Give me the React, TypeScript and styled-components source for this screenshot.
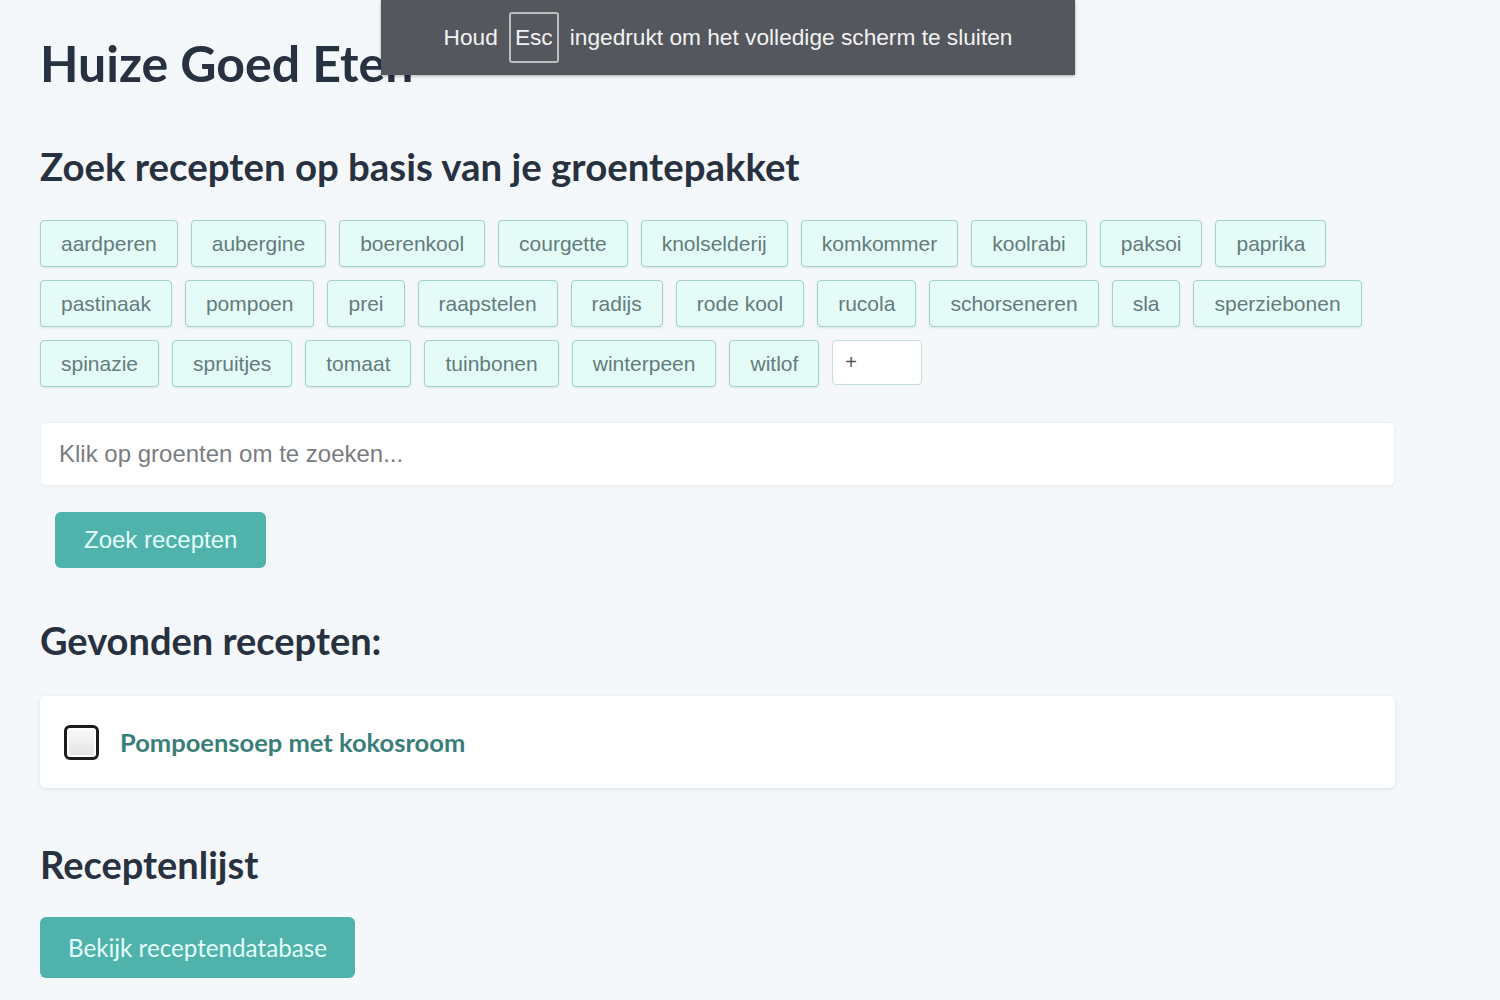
import styled, {createGlobalStyle} from "styled-components";

const GlobalStyle = createGlobalStyle`
    body {
        margin: 0;
        background: #f5f8fb;
        font-family: "Liberation Sans", Arial, sans-serif;
    }
`;

const vegetables = [
    "aardperen", "aubergine", "boerenkool", "courgette", "knolselderij",
    "komkommer", "koolrabi", "paksoi", "paprika", "pastinaak", "pompoen",
    "prei", "raapstelen", "radijs", "rode kool", "rucola", "schorseneren",
    "sla", "sperziebonen", "spinazie", "spruitjes", "tomaat", "tuinbonen",
    "winterpeen", "witlof",
];

const Page = styled.main`
    width: 1355px;
    padding: 33px 40px 20px;
`;

const Title = styled.h1`
    margin: 0;
    font-family: Lato, "Noto Sans", sans-serif;
    font-weight: 700;
    font-size: 50px;
    line-height: 60px;
    color: #28313f;
`;

const Heading = styled.h2<{$size: number}>`
    margin: 0;
    font-family: Lato, "Noto Sans", sans-serif;
    font-weight: 700;
    font-size: ${(p) => p.$size}px;
    line-height: 44px;
    color: #28313f;
`;

const Section = styled.section<{$top: number}>`
    margin-top: ${(p) => p.$top}px;
`;

const TagList = styled.div`
    display: flex;
    flex-wrap: wrap;
    gap: 13px 13px;
    margin-top: 32px;
    width: 1340px;
`;

const Tag = styled.button`
    height: 47px;
    padding: 0 20px;
    border: 1px solid #a3d3cc;
    border-radius: 4px;
    background: #e5fbf8;
    color: #627d7c;
    font-family: "Liberation Sans", Arial, sans-serif;
    font-size: 21px;
    box-shadow: 0 1px 2px rgba(80, 140, 130, 0.18);
`;

const AddInput = styled.input`
    box-sizing: border-box;
    width: 90px;
    height: 45px;
    padding: 0 12px;
    border: 1px solid #c6dcd9;
    border-radius: 4px;
    background: #fff;
    font-family: "Liberation Sans", Arial, sans-serif;
    font-size: 20px;
    color: #444;

    &::placeholder {
        color: #555;
    }
`;

const SearchInput = styled.input`
    box-sizing: border-box;
    display: block;
    width: 100%;
    height: 64px;
    margin-top: 35px;
    padding: 0 18px;
    border: 1px solid #eef1f4;
    border-radius: 6px;
    background: #fff;
    font-family: "Liberation Sans", Arial, sans-serif;
    font-size: 24px;
    box-shadow: 0 1px 3px rgba(0, 0, 0, 0.04);

    &::placeholder {
        color: #7a7d80;
    }
`;

const PrimaryButton = styled.button`
    border: none;
    border-radius: 6px;
    background: #4fb2ab;
    color: #e4fffb;
    cursor: pointer;
`;

const SearchButton = styled(PrimaryButton)`
    display: block;
    height: 56px;
    margin: 26px 0 0 15px;
    padding: 0 29px;
    font-family: "Liberation Sans", Arial, sans-serif;
    font-size: 24px;
`;

const DatabaseButton = styled(PrimaryButton)`
    height: 61px;
    margin-top: 31px;
    padding: 0 28px;
    font-family: Lato, "Noto Sans", sans-serif;
    font-size: 24.2px;
`;

const ResultCard = styled.div`
    display: flex;
    align-items: center;
    gap: 21px;
    height: 92px;
    margin-top: 34px;
    padding: 0 24px;
    border-radius: 6px;
    background: #fff;
    box-shadow: 0 1px 4px rgba(0, 0, 0, 0.1);
`;

const Checkbox = styled.span`
    box-sizing: border-box;
    width: 35px;
    height: 35px;
    border: 3px solid #1c1c1c;
    border-radius: 6px;
    background: linear-gradient(#fafafa, #e2e2e2);
    box-shadow: inset 0 0 0 2px #fff;
`;

const RecipeName = styled.span`
    font-family: Lato, "Noto Sans", sans-serif;
    font-weight: 700;
    font-size: 25.5px;
    color: #3a7e7a;
`;

const FullscreenNotice = styled.div`
    position: absolute;
    top: 0;
    left: 381px;
    width: 694px;
    height: 75px;
    display: flex;
    align-items: center;
    justify-content: center;
    gap: 11px;
    background: #54575d;
    color: #f2f2f2;
    font-family: "Liberation Sans", Arial, sans-serif;
    font-size: 22.7px;
    box-shadow: 0 1px 3px rgba(0, 0, 0, 0.3);
`;

const Key = styled.span`
    display: flex;
    align-items: center;
    justify-content: center;
    box-sizing: border-box;
    width: 50px;
    height: 51px;
    border: 2px solid #bcbcbc;
    border-radius: 3px;
`;

export default function App() {
    return (
        <>
            <GlobalStyle />
            <Page>
                <Title>Huize Goed Eten</Title>

                <Section $top={51}>
                    <Heading $size={38.4}>Zoek recepten op basis van je groentepakket</Heading>
                    <TagList>
                        {vegetables.map((veg) => (
                            <Tag key={veg}>{veg}</Tag>
                        ))}
                        <AddInput placeholder="+" />
                    </TagList>
                    <SearchInput placeholder="Klik op groenten om te zoeken..." />
                    <SearchButton>Zoek recepten</SearchButton>
                </Section>

                <Section $top={50}>
                    <Heading $size={38}>Gevonden recepten:</Heading>
                    <ResultCard>
                        <Checkbox />
                        <RecipeName>Pompoensoep met kokosroom</RecipeName>
                    </ResultCard>
                </Section>

                <Section $top={54}>
                    <Heading $size={38}>Receptenlijst</Heading>
                    <DatabaseButton>Bekijk receptendatabase</DatabaseButton>
                </Section>
            </Page>
            <FullscreenNotice>
                Houd <Key>Esc</Key> ingedrukt om het volledige scherm te sluiten
            </FullscreenNotice>
        </>
    );
}
